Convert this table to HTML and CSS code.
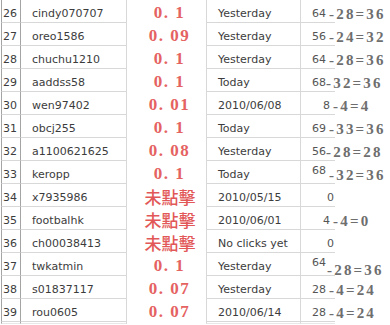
FILE: index.html
```html
<!DOCTYPE html>
<html>
<head>
<meta charset="utf-8">
<link rel="stylesheet" href="styles.css">
</head>
<body>
<div class="sheet">
  <div class="row"><div class="c num">26</div><div class="c name">cindy070707</div><div class="c val"><span class="red">0. 1</span></div><div class="c date">Yesterday</div><div class="c calc"><span class="base">64</span><span class="ov">-28=36</span></div></div>
  <div class="row"><div class="c num">27</div><div class="c name">oreo1586</div><div class="c val"><span class="red">0. 09</span></div><div class="c date">Yesterday</div><div class="c calc"><span class="base">56</span><span class="ov">-24=32</span></div></div>
  <div class="row"><div class="c num">28</div><div class="c name">chuchu1210</div><div class="c val"><span class="red">0. 1</span></div><div class="c date">Yesterday</div><div class="c calc"><span class="base">64</span><span class="ov">-28=36</span></div></div>
  <div class="row"><div class="c num">29</div><div class="c name">aaddss58</div><div class="c val"><span class="red">0. 1</span></div><div class="c date">Today</div><div class="c calc"><span class="base">68</span><span class="ov tight">-32=36</span></div></div>
  <div class="row"><div class="c num">30</div><div class="c name">wen97402</div><div class="c val"><span class="red">0. 01</span></div><div class="c date">2010/06/08</div><div class="c calc one"><span class="base">8</span><span class="ov">-4=4</span></div></div>
  <div class="row"><div class="c num">31</div><div class="c name">obcj255</div><div class="c val"><span class="red">0. 1</span></div><div class="c date">Today</div><div class="c calc"><span class="base">69</span><span class="ov">-33=36</span></div></div>
  <div class="row"><div class="c num">32</div><div class="c name">a1100621625</div><div class="c val"><span class="red">0. 08</span></div><div class="c date">Yesterday</div><div class="c calc"><span class="base">56</span><span class="ov tight">-28=28</span></div></div>
  <div class="row"><div class="c num">33</div><div class="c name">keropp</div><div class="c val"><span class="red">0. 1</span></div><div class="c date">Today</div><div class="c calc"><span class="base up">68</span><span class="ov">-32=36</span></div></div>
  <div class="row"><div class="c num">34</div><div class="c name">x7935986</div><div class="c val"><span class="cn">未點擊</span></div><div class="c date">2010/05/15</div><div class="c calc zero"><span class="base">0</span></div></div>
  <div class="row"><div class="c num">35</div><div class="c name">footbalhk</div><div class="c val"><span class="cn">未點擊</span></div><div class="c date">2010/06/01</div><div class="c calc one"><span class="base">4</span><span class="ov">-4=0</span></div></div>
  <div class="row"><div class="c num">36</div><div class="c name">ch00038413</div><div class="c val"><span class="cn">未點擊</span></div><div class="c date">No clicks yet</div><div class="c calc zero"><span class="base">0</span></div></div>
  <div class="row"><div class="c num">37</div><div class="c name">twkatmin</div><div class="c val"><span class="red">0. 1</span></div><div class="c date">Yesterday</div><div class="c calc"><span class="base up">64</span><span class="ov low">-28=36</span></div></div>
  <div class="row"><div class="c num">38</div><div class="c name">s01837117</div><div class="c val"><span class="red">0. 07</span></div><div class="c date">Yesterday</div><div class="c calc"><span class="base">28</span><span class="ov">-4=24</span></div></div>
  <div class="row"><div class="c num">39</div><div class="c name">rou0605</div><div class="c val"><span class="red">0. 07</span></div><div class="c date">2010/06/14</div><div class="c calc"><span class="base">28</span><span class="ov">-4=24</span></div></div>
  <div class="row tail"><div class="c num"></div><div class="c name"></div><div class="c val"></div><div class="c date"></div><div class="c calc"></div></div>
</div>
</body>
</html>
```

FILE: styles.css
```css
body {
  margin: 0;
  background: #ffffff;
  font-family: "DejaVu Sans", sans-serif;
  font-size: 11px;
  color: #3c3c3c;
}

.sheet {
  padding-left: 1px;
}

.row {
  display: grid;
  grid-template-columns: 19px 106px 80px 94px 35px;
  height: 23px;
}

.c {
  box-sizing: border-box;
  border-left: 1px solid #d8d8d8;
  border-bottom: 1px solid #d8d8d8;
  padding-top: 6px;
  line-height: 16px;
  white-space: nowrap;
}

.num {
  border-left-color: #a4a4a4;
  padding-left: 1px;
}

.name {
  border-left-color: #a4a4a4;
  padding-left: 11px;
}

.val {
  border-bottom: none;
  display: flex;
  justify-content: center;
  align-items: center;
  padding: 2px 0 0 6px;
}

.date {
  padding-left: 11px;
}

.calc {
  padding-left: 11px;
}

.calc.one {
  padding-left: 22px;
}

.calc.zero {
  padding-left: 26px;
}

.base {
  font-size: 11px;
  color: #555555;
}

.base.up {
  position: relative;
  top: -4px;
}

.ov {
  font-family: "Liberation Serif", serif;
  font-weight: bold;
  font-size: 15px;
  line-height: 10px;
  color: #6e6e6e;
  letter-spacing: 2.2px;
  margin-left: 3px;
  vertical-align: -2px;
}

.ov.tight {
  margin-left: 0;
}

.ov.low {
  margin-left: 1px;
  vertical-align: -5px;
}

.red {
  font-family: "Liberation Serif", serif;
  font-weight: bold;
  font-size: 17px;
  line-height: 18px;
  color: #e56262;
  letter-spacing: 1.5px;
}

.cn {
  font-family: "Noto Sans CJK TC", sans-serif;
  font-weight: 500;
  font-size: 17px;
  line-height: 18px;
  color: #e25858;
  margin-left: 1px;
}

.tail {
  height: 2px;
}

.tail .c {
  padding: 0;
  border-bottom-color: #e8e8e8;
}

.tail .val {
  border-bottom: none;
}
```
